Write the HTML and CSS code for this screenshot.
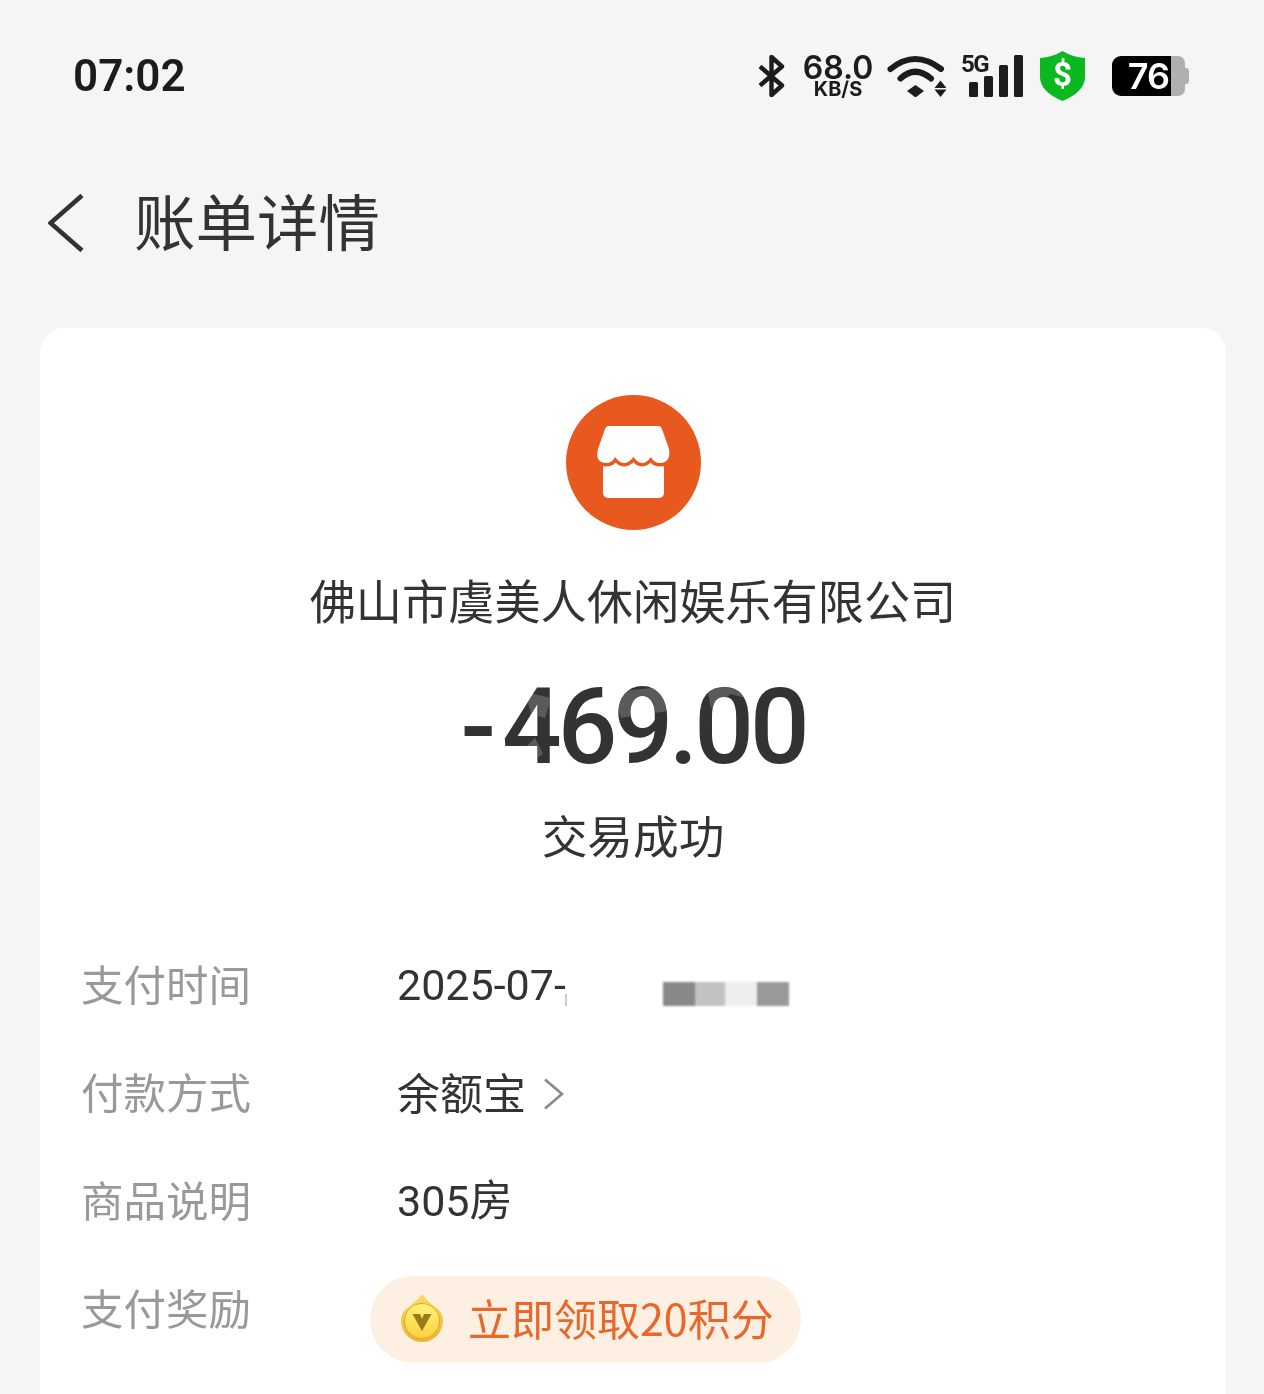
FILE: index.html
```html
<!DOCTYPE html>
<html lang="zh-CN">
<head>
<meta charset="UTF-8">
<meta name="viewport" content="width=device-width, initial-scale=1.0">
<title>账单详情</title>
<link rel="stylesheet" href="styles.css">
</head>
<body>
  <div class="page">
    <div class="status-bar">
      <div class="clock">07:02</div>
      <div class="status-icons">
        <svg class="bt-icon" viewBox="0 0 27 42" width="27" height="42">
          <path d="M2 11.5 L24 30.5 L13.5 40 V2 L24 11.5 L2 30.5" fill="none" stroke="#1c1c1c" stroke-width="4.4" stroke-linejoin="round"/>
        </svg>
        <div class="speed">
          <span class="speed-num">68.0</span>
          <span class="speed-unit">KB/S</span>
        </div>
        <svg class="wifi-icon" viewBox="0 0 60 42" width="60" height="42">
          <path d="M3.500 14 Q28 -6 54 14" fill="none" stroke="#1c1c1c" stroke-width="6" stroke-linecap="round"/>
          <path d="M13.500 23.500 Q28 10 44 23.500" fill="none" stroke="#1c1c1c" stroke-width="6" stroke-linecap="round"/>
          <path d="M20 36 L28.500 30 L37 36 L28.500 42.500 Z" fill="#1c1c1c"/>
          <path d="M47.500 33 L53.500 25.500 L59.500 33 Z M47.500 34.500 H59.500 L53.500 42 Z" fill="#1c1c1c"/>
        </svg>
        <div class="signal">
          <span class="signal-type">5G</span>
          <i class="bar bar-1"></i>
          <i class="bar bar-2"></i>
          <i class="bar bar-3"></i>
          <i class="bar bar-4"></i>
        </div>
        <div class="shield">
          <svg viewBox="0 0 45 50" width="45" height="50">
            <path d="M22.500 0 Q32 6 45 7 V27 Q44 41 22.500 50 Q1 41 0 27 V7 Q13 6 22.500 0 Z" fill="#0cb81f"/>
          </svg>
          <span class="shield-mark">$</span>
        </div>
        <div class="battery">
          <div class="battery-level">76</div>
          <div class="battery-rest"></div>
          <div class="battery-nub"></div>
        </div>
      </div>
    </div>

    <div class="title-bar">
      <svg class="back-icon" viewBox="0 0 36 58" width="36" height="58">
        <path d="M34 1.500 L2.500 29 L34 56.500" fill="none" stroke="#333" stroke-width="4.600"/>
      </svg>
      <h1 class="title">账单详情</h1>
    </div>

    <div class="card">
      <svg class="merchant-icon" viewBox="0 0 135 135" width="135" height="135">
        <circle cx="67.500" cy="67.500" r="67.500" fill="#e8591f"/>
        <rect x="37" y="60" width="61" height="43" rx="5" fill="#fff"/>
        <path d="M43 31 H92 Q95 31 96 34 L103 54 Q105 67 95 68 Q88 68.500 85 62 Q76 74 67.500 62 Q58 74 49 62 Q46 68.500 39 68 Q29 67 32 54 L39 34 Q40 31 43 31 Z" fill="#fff" stroke="#e8591f" stroke-width="7" paint-order="stroke"/>
      </svg>
      <div class="merchant">佛山市虞美人休闲娱乐有限公司</div>
      <div class="amount">
        <span class="minus">-</span>469.00
        <svg class="amount-mark" viewBox="0 0 344 90" width="344" height="90">
          <path d="M64 8 L90 14 L84 34 L70 30 Z M74 54 L82 70 L70 78 L62 66 Z M122 40 L132 56 L122 66 Z M150 8 L210 2 L214 26 L160 34 Z M246 4 L286 2 L292 16 L270 10 L250 24 Z" fill="#5a5a5a"/>
        </svg>
      </div>
      <div class="trade-status">交易成功</div>

      <div class="rows">
        <div class="row">
          <div class="row-label">支付时间</div>
          <div class="row-value">
            <span class="date">2025-07-</span>
            <i class="cut-mark"></i>
            <div class="mosaic">
              <i class="cell-1"></i><i class="cell-2"></i><i class="cell-3"></i><i class="cell-4"></i>
            </div>
          </div>
        </div>
        <div class="row">
          <div class="row-label">付款方式</div>
          <div class="row-value">
            <span>余额宝</span>
            <svg class="more-icon" viewBox="0 0 21 32" width="21" height="32">
              <path d="M2 1.500 L19 16 L2 30.500" fill="none" stroke="#888" stroke-width="2.600"/>
            </svg>
          </div>
        </div>
        <div class="row">
          <div class="row-label">商品说明</div>
          <div class="row-value"><span class="goods">305房</span></div>
        </div>
        <div class="row row-reward">
          <div class="row-label">支付奖励</div>
          <div class="reward">
            <svg class="coin" viewBox="0 0 42 48" width="42" height="48">
              <defs>
                <linearGradient id="coinEdge" x1="0" y1="0" x2="0" y2="1">
                  <stop offset="0" stop-color="#f7dc6a"/>
                  <stop offset="1" stop-color="#eeb32f"/>
                </linearGradient>
                <linearGradient id="coinFace" x1="0" y1="0" x2="0" y2="1">
                  <stop offset="0" stop-color="#fff27a"/>
                  <stop offset="1" stop-color="#fbd23e"/>
                </linearGradient>
              </defs>
              <path d="M21 0 Q28 9 37 15 Q42 20 42 27 A21 21 0 0 1 0 27 Q0 20 5 15 Q14 9 21 0 Z" fill="url(#coinEdge)"/>
              <circle cx="21" cy="27" r="17.500" fill="url(#coinFace)" stroke="#e0a72b" stroke-width="1"/>
              <path d="M11.500 20 H19 L21 25 L23 20 H30.500 L21 37 Z" fill="#9c7a1c"/>
            </svg>
            <span class="reward-text">立即领取20积分</span>
          </div>
        </div>
      </div>
    </div>
  </div>
</body>
</html>
```

FILE: styles.css
```css
html, body {
  margin: 0;
  padding: 0;
}
body {
  background-color: #f5f5f5;
  font-family: "Noto Sans CJK SC", "Noto Sans", sans-serif;
  color: #333;
}
.page {
  width: 1264px;
  height: 1394px;
  overflow: hidden;
}

/* status bar */
.status-bar {
  height: 150px;
  padding: 2px 75px 0 73px;
  box-sizing: border-box;
  display: flex;
  justify-content: space-between;
  align-items: center;
}
.clock {
  font-family: Roboto, sans-serif;
  font-size: 44px;
  font-weight: 600;
  color: #1c1c1c;
}
.status-icons {
  display: flex;
  align-items: center;
  color: #1c1c1c;
  font-family: Inter, Roboto, sans-serif;
}
.speed {
  width: 70px;
  margin: 0 14px 0 18px;
  display: flex;
  flex-direction: column;
  align-items: center;
}
.speed-num {
  font-size: 32px;
  line-height: 27px;
  font-weight: 600;
}
.speed-unit {
  font-size: 20px;
  line-height: 17px;
  font-weight: 700;
}
.signal {
  position: relative;
  width: 54px;
  height: 42px;
  margin: 0 17px 0 22px;
  display: flex;
  align-items: flex-end;
  gap: 6.5px;
}
.signal-type {
  position: absolute;
  left: -8px;
  top: -3px;
  font-family: Roboto, sans-serif;
  font-size: 24px;
  line-height: 24px;
  font-weight: 700;
  letter-spacing: -1.5px;
}
.bar {
  width: 8.5px;
  background-color: #1c1c1c;
  border-radius: 1.5px;
}
.bar-1 { height: 15px; }
.bar-2 { height: 21px; }
.bar-3 { height: 32px; }
.bar-4 { height: 42px; }
.shield {
  position: relative;
  width: 45px;
  height: 50px;
  margin-right: 27px;
}
.shield-mark {
  position: absolute;
  left: 0;
  right: 0;
  top: 2px;
  text-align: center;
  color: #fff;
  font-family: Roboto, sans-serif;
  font-size: 33px;
  line-height: 44px;
  font-weight: 700;
}
.battery {
  display: flex;
  align-items: center;
}
.battery-level {
  width: 59px;
  height: 40px;
  box-sizing: border-box;
  padding-right: 2px;
  background-color: #000;
  border-radius: 9px 0 0 9px;
  color: #fff;
  font-family: Inter, Roboto, sans-serif;
  font-size: 36px;
  line-height: 40px;
  font-weight: 600;
  text-align: right;
  letter-spacing: -1px;
}
.battery-rest {
  width: 14px;
  height: 40px;
  background-color: #b0b0b0;
  border-radius: 0 7px 7px 0;
}
.battery-nub {
  width: 4px;
  height: 16px;
  background-color: #b0b0b0;
  border-radius: 0 3px 3px 0;
}

/* title */
.title-bar {
  height: 178px;
  padding: 0 0 32px 48px;
  box-sizing: border-box;
  display: flex;
  align-items: center;
}
.title {
  margin: 0 0 6px 50px;
  font-size: 61.5px;
  line-height: 80px;
  font-weight: 400;
  color: #333;
}

/* card */
.card {
  margin: 0 38px 0 40px;
  height: 1100px;
  padding-top: 67px;
  box-sizing: border-box;
  background-color: #fff;
  border-radius: 24px 24px 0 0;
  display: flex;
  flex-direction: column;
  align-items: center;
}
.merchant {
  margin-top: 36px;
  font-size: 46.2px;
  line-height: 66px;
  color: #333;
}
.amount {
  position: relative;
  margin-top: 34px;
  font-family: Roboto, sans-serif;
  font-size: 105px;
  line-height: 124px;
  font-weight: 500;
  letter-spacing: -4px;
  color: #333;
}
.minus {
  margin-right: 10px;
}
.amount-mark {
  position: absolute;
  left: 1px;
  top: 18px;
  mix-blend-mode: lighten;
}
.trade-status {
  margin-top: 11px;
  font-size: 45.7px;
  line-height: 66px;
  color: #333;
}
.rows {
  align-self: stretch;
  margin-top: 62px;
  padding-left: 41px;
}
.row {
  height: 108px;
  display: flex;
  align-items: center;
}
.row-reward {
  align-items: flex-start;
}
.row-label {
  width: 316px;
  flex-shrink: 0;
  font-size: 42.5px;
  line-height: 108px;
  color: #999;
}
.row-value {
  display: flex;
  align-items: center;
  font-size: 43px;
  color: #333;
}
.row-value span {
  font-family: Roboto, "Noto Sans CJK SC", sans-serif;
}
.row-value .date {
  margin-top: 4px;
}
.row-value .goods {
  margin-bottom: 4px;
}
.cut-mark {
  width: 2px;
  height: 12px;
  margin: 34px 0 0 -1px;
  background-color: #ccc;
}
.mosaic {
  display: flex;
  margin: 22px 0 0 96px;
  filter: blur(1px);
}
.mosaic i {
  display: block;
  width: 32px;
  height: 24px;
}
.mosaic .cell-1 { background-color: #888; }
.mosaic .cell-2 { background-color: #c2c2c2; width: 30px; }
.mosaic .cell-3 { background-color: #eee; }
.mosaic .cell-4 { background-color: #999; }
.more-icon {
  margin: 6px 0 0 17px;
}
.reward {
  width: 431px;
  height: 87px;
  margin: 23px 0 0 -27px;
  padding-left: 31px;
  box-sizing: border-box;
  background-color: #fdf0e3;
  border-radius: 44px;
  display: flex;
  align-items: center;
}
.coin {
  margin-bottom: 4px;
}
.reward-text {
  margin: 0 0 6px 25px;
  font-size: 43px;
  color: #e8672a;
  white-space: nowrap;
}
```
